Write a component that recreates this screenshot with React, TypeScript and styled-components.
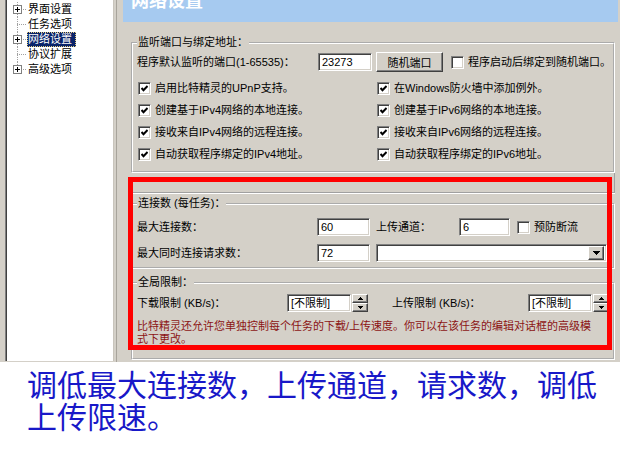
import React from "react";
import styled, { createGlobalStyle } from "styled-components";

const GlobalStyle = createGlobalStyle`
  html, body {
    margin: 0;
    padding: 0;
    background: #fff;
  }
  body {
    font-family: "Liberation Sans", "Noto Sans CJK SC", sans-serif;
  }
`;

const Page = styled.div`
  width: 631px;
  height: 449px;
  overflow: hidden;
  background: #fff;
`;

const Dialog = styled.div`
  position: relative;
  display: flex;
  width: 620px;
  height: 362px;
  background: #d4d0c8;
  font-size: 11px;
  color: #000;
`;

/* ---------- tree ---------- */

const Tree = styled.div`
  box-sizing: border-box;
  flex: none;
  width: 109px;
  height: 361px;
  margin-left: 5px;
  padding-top: 2px;
  background: #fff;
  border-left: 1px solid #808080;
  border-right: 1px solid #c8c4bc;
  box-shadow: inset 1px 0 0 #404040;
`;

const TreeRow = styled.div`
  display: flex;
  align-items: center;
  height: 15px;
`;

const TreeLabel = styled.span<{ $selected?: boolean }>`
  height: 15px;
  line-height: 15px;
  padding: 0 4px 0 1px;
  white-space: nowrap;
  background: ${({ $selected }) => ($selected ? "#0a246a" : "transparent")};
  color: ${({ $selected }) => ($selected ? "#fff" : "#000")};
  outline: ${({ $selected }) => ($selected ? "1px dotted #e8d080" : "none")};
  outline-offset: -1px;
`;

function TreeLines({ expander, last }: { expander?: boolean; last?: boolean }) {
  return (
    <svg width="21" height="15" viewBox="0 0 21 15" shapeRendering="crispEdges" style={{ flex: "none" }}>
      <line x1="11.5" y1="0" x2="11.5" y2={last ? 7.5 : 15} stroke="#a0a0a0" strokeDasharray="1 1" />
      <line x1="11" y1="7.5" x2="21" y2="7.5" stroke="#a0a0a0" strokeDasharray="1 1" />
      {expander && (
        <>
          <rect x="7.5" y="3.5" width="8" height="8" fill="#fff" stroke="#808080" />
          <line x1="9" y1="7.5" x2="14" y2="7.5" stroke="#000" />
          <line x1="11.5" y1="5" x2="11.5" y2="10" stroke="#000" />
        </>
      )}
    </svg>
  );
}

const treeItems = [
  { text: "界面设置", expander: true },
  { text: "任务选项" },
  { text: "网络设置", expander: true, selected: true },
  { text: "协议扩展" },
  { text: "高级选项", expander: true, last: true },
];

/* ---------- main pane ---------- */

const Main = styled.div`
  box-sizing: border-box;
  flex: none;
  width: 504px;
  margin-left: 2px;
  padding: 0 2px 0 6px;
  border-left: 1px solid #a8a49c;
  display: flex;
  flex-direction: column;
`;

const Header = styled.div`
  flex: none;
  height: 22px;
  padding-left: 8px;
  overflow: hidden;
  background: #a6caf0;
`;

const HeaderTitle = styled.div`
  margin-top: -10px;
  font-family: "Noto Sans CJK SC", sans-serif;
  font-size: 18px;
  line-height: 18px;
  font-weight: 700;
  color: #fff;
`;

const Body = styled.div`
  padding: 0 3px 0 8px;
`;

const Group = styled.fieldset<{ $top: number; $pt: number; $pb: number }>`
  margin: ${({ $top }) => $top}px 0 0;
  padding: ${({ $pt }) => $pt}px 4px ${({ $pb }) => $pb}px 4px;
  border: 2px groove #fff;
  min-width: 0;
`;

const Legend = styled.legend`
  padding: 0 1px;
  line-height: 13px;
  font-size: 11px;
`;

const Strip = styled.div`
  height: 19px;
  border-right: 1px solid #a0a0a0;
  border-bottom: 1px solid #a0a0a0;
  box-shadow: 0 1px 0 #fff;
`;

const Row = styled.div<{ $mt?: number }>`
  display: flex;
  align-items: center;
  margin-top: ${({ $mt }) => $mt ?? 0}px;
`;

const Label = styled.span<{ $w?: number; $ml?: number }>`
  flex: none;
  width: ${({ $w }) => ($w ? `${$w}px` : "auto")};
  margin-left: ${({ $ml }) => $ml ?? 0}px;
  line-height: 13px;
  white-space: nowrap;
`;

const Field = styled.div<{ $w: number; $ml?: number }>`
  box-sizing: border-box;
  flex: none;
  display: flex;
  align-items: center;
  width: ${({ $w }) => $w}px;
  height: 18px;
  margin-left: ${({ $ml }) => $ml ?? 0}px;
  padding: 0 2px 0 3px;
  background: #fff;
  border: 1px solid;
  border-color: #808080 #fff #fff #808080;
  box-shadow: inset 1px 1px 0 #404040, inset -1px -1px 0 #d4d0c8;
  line-height: 14px;
  white-space: nowrap;
`;

const ComboField = styled(Field)`
  justify-content: flex-end;
  padding: 0 2px 0 0;
`;

const raised = `
  box-sizing: border-box;
  background: #d4d0c8;
  border: 1px solid;
  border-color: #fff #404040 #404040 #fff;
  box-shadow: inset -1px -1px 0 #808080;
`;

const PushButton = styled.button`
  ${raised}
  flex: none;
  width: 67px;
  height: 20px;
  margin-left: 4px;
  padding: 0;
  font: inherit;
  color: #000;
`;

const DropButton = styled.span`
  ${raised}
  display: flex;
  align-items: center;
  justify-content: center;
  width: 16px;
  height: 14px;
`;

const Spin = styled.div`
  flex: none;
  display: flex;
  flex-direction: column;
  width: 16px;
  height: 18px;
  margin-left: 1px;
`;

const SpinButton = styled.span`
  ${raised}
  flex: 1;
  display: flex;
  align-items: center;
  justify-content: center;
`;

const Box = styled.span<{ $ml?: number }>`
  box-sizing: border-box;
  flex: none;
  display: inline-flex;
  align-items: center;
  justify-content: center;
  width: 13px;
  height: 13px;
  margin-left: ${({ $ml }) => $ml ?? 0}px;
  background: #fff;
  border: 1px solid;
  border-color: #808080 #fff #fff #808080;
  box-shadow: inset 1px 1px 0 #404040, inset -1px -1px 0 #d4d0c8;
`;

function CheckBox({ checked, ml }: { checked?: boolean; ml?: number }) {
  return (
    <Box $ml={ml}>
      {checked && (
        <svg width="7" height="7" viewBox="0 0 7 7">
          <polyline points="0.5,3 2.5,5.2 6.6,1" fill="none" stroke="#000" strokeWidth="2.1" />
        </svg>
      )}
    </Box>
  );
}

const CheckGrid = styled.div`
  display: grid;
  grid-template-columns: 239px 1fr;
  grid-auto-rows: 22px;
  margin-top: 5px;
`;

const CheckItem = styled.label`
  display: flex;
  align-items: center;
  gap: 4px;
  padding-left: 1px;
  line-height: 13px;
  white-space: nowrap;
`;

const Note = styled.p`
  width: 460px;
  margin: 8px 0 0;
  line-height: 13px;
  color: #8c1414;
`;

const Highlight = styled.div`
  position: absolute;
  left: 128px;
  top: 177px;
  box-sizing: border-box;
  width: 484px;
  height: 173px;
  border: 5px solid #ff0000;
  pointer-events: none;
`;

const Caption = styled.div`
  width: 590px;
  padding: 5px 0 0 27px;
  font-family: "Noto Sans CJK SC", sans-serif;
  font-size: 30px;
  line-height: 32px;
  color: #1818c8;
`;

const Triangle = ({ dir, w = 7, h = 4 }: { dir: "up" | "down"; w?: number; h?: number }) => (
  <svg width={w} height={h} viewBox={`0 0 ${w} ${h}`} shapeRendering="crispEdges">
    <polygon points={dir === "down" ? `0,0 ${w},0 ${w / 2},${h}` : `0,${h} ${w},${h} ${w / 2},0`} fill="#000" />
  </svg>
);

const checks: [string, string][] = [
  ["启用比特精灵的UPnP支持。", "在Windows防火墙中添加例外。"],
  ["创建基于IPv4网络的本地连接。", "创建基于IPv6网络的本地连接。"],
  ["接收来自IPv4网络的远程连接。", "接收来自IPv6网络的远程连接。"],
  ["自动获取程序绑定的IPv4地址。", "自动获取程序绑定的IPv6地址。"],
];

export default function App() {
  return (
    <Page>
      <GlobalStyle />
      <Dialog>
        <Tree>
          {treeItems.map((item) => (
            <TreeRow key={item.text}>
              <TreeLines expander={item.expander} last={item.last} />
              <TreeLabel $selected={item.selected}>{item.text}</TreeLabel>
            </TreeRow>
          ))}
        </Tree>

        <Main>
          <Header>
            <HeaderTitle>网络设置</HeaderTitle>
          </Header>
          <Body>
            <Group $top={14} $pt={3} $pb={6}>
              <Legend>监听端口与绑定地址：</Legend>
              <Row>
                <Label $w={181}>程序默认监听的端口(1-65535)：</Label>
                <Field $w={54}>23273</Field>
                <PushButton>随机端口</PushButton>
                <CheckBox ml={8} />
                <Label $ml={4}>程序启动后绑定到随机端口。</Label>
              </Row>
              <CheckGrid>
                {checks.flat().map((text) => (
                  <CheckItem key={text}>
                    <CheckBox checked />
                    {text}
                  </CheckItem>
                ))}
              </CheckGrid>
            </Group>

            <Strip />

            <Group $top={4} $pt={8} $pb={5}>
              <Legend>连接数 (每任务)：</Legend>
              <Row>
                <Label $w={180}>最大连接数：</Label>
                <Field $w={53}>60</Field>
                <Label $w={83} $ml={6}>上传通道：</Label>
                <Field $w={51}>6</Field>
                <CheckBox ml={7} />
                <Label $ml={4}>预防断流</Label>
              </Row>
              <Row $mt={8}>
                <Label $w={180}>最大同时连接请求数：</Label>
                <Field $w={53}>72</Field>
                <ComboField $w={231} $ml={6}>
                  <DropButton>
                    <Triangle dir="down" />
                  </DropButton>
                </ComboField>
              </Row>
            </Group>

            <Group $top={7} $pt={5} $pb={12}>
              <Legend>全局限制：</Legend>
              <Row>
                <Label $w={150}>下载限制 (KB/s)：</Label>
                <Field $w={64}>[不限制]</Field>
                <Spin>
                  <SpinButton>
                    <Triangle dir="up" w={5} h={3} />
                  </SpinButton>
                  <SpinButton>
                    <Triangle dir="down" w={5} h={3} />
                  </SpinButton>
                </Spin>
                <Label $w={136} $ml={24}>上传限制 (KB/s)：</Label>
                <Field $w={64}>[不限制]</Field>
                <Spin>
                  <SpinButton>
                    <Triangle dir="up" w={5} h={3} />
                  </SpinButton>
                  <SpinButton>
                    <Triangle dir="down" w={5} h={3} />
                  </SpinButton>
                </Spin>
              </Row>
              <Note>
                比特精灵还允许您单独控制每个任务的下载/上传速度。你可以在该任务的编辑对话框的高级模式下更改。
              </Note>
            </Group>
          </Body>
        </Main>

        <Highlight />
      </Dialog>

      <Caption>调低最大连接数，上传通道，请求数，调低上传限速。</Caption>
    </Page>
  );
}
